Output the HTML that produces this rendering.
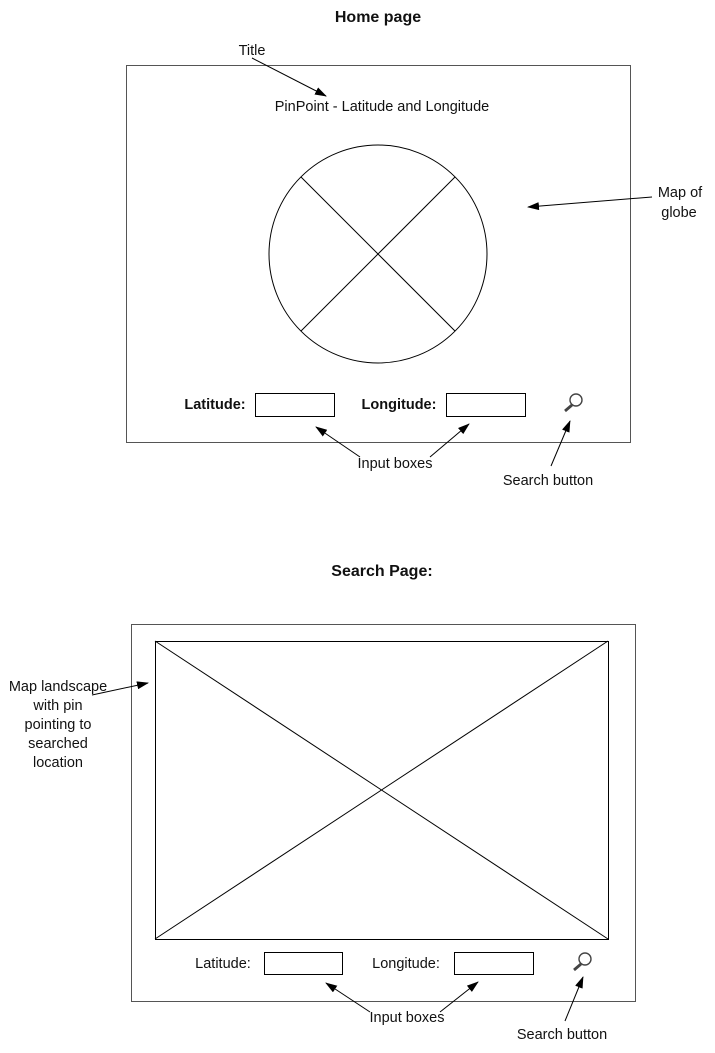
<!DOCTYPE html>
<html><head><meta charset="utf-8"><style>
html,body{margin:0;padding:0;background:#fff;width:715px;height:1053px;overflow:hidden}
svg{display:block}
text{font-family:"Liberation Sans",sans-serif;font-size:14.5px;fill:#111}
.b{font-weight:bold}
</style></head><body>
<svg width="715" height="1053" viewBox="0 0 715 1053">
<defs><marker id="a" markerWidth="12" markerHeight="8" refX="11" refY="4" orient="auto" markerUnits="userSpaceOnUse"><path d="M0,0 L12,4 L0,8 z" fill="#000"/></marker></defs>
<g stroke="#000" fill="none" stroke-width="1">
<rect x="126.5" y="65.5" width="504" height="377" stroke="#555"/>
<circle cx="378" cy="254" r="109"/>
<line x1="301" y1="177" x2="455" y2="331"/><line x1="455" y1="177" x2="301" y2="331"/>
<rect x="255.5" y="393.5" width="79" height="23"/>
<rect x="446.5" y="393.5" width="79" height="23"/>
<line x1="252" y1="58" x2="326" y2="96" marker-end="url(#a)"/>
<line x1="652" y1="197" x2="528" y2="207" marker-end="url(#a)"/>
<line x1="360" y1="457" x2="316" y2="427" marker-end="url(#a)"/>
<line x1="430" y1="457" x2="469" y2="424" marker-end="url(#a)"/>
<line x1="551" y1="466" x2="570" y2="421" marker-end="url(#a)"/>
<circle cx="576" cy="400" r="6" stroke="#444" stroke-width="1.4"/>
<line x1="572" y1="405" x2="565" y2="411" stroke="#444" stroke-width="2.8"/>

<rect x="131.5" y="624.5" width="504" height="377" stroke="#555"/>
<rect x="155.5" y="641.5" width="453" height="298"/>
<line x1="155" y1="641" x2="608" y2="939"/><line x1="608" y1="641" x2="155" y2="939"/>
<rect x="264.5" y="952.5" width="78" height="22"/>
<rect x="454.5" y="952.5" width="79" height="22"/>
<line x1="92" y1="695" x2="148" y2="683" marker-end="url(#a)"/>
<line x1="370" y1="1012" x2="326" y2="983" marker-end="url(#a)"/>
<line x1="440" y1="1012" x2="478" y2="982" marker-end="url(#a)"/>
<line x1="565" y1="1021" x2="583" y2="977" marker-end="url(#a)"/>
<circle cx="585" cy="959" r="6" stroke="#444" stroke-width="1.4"/>
<line x1="581" y1="964" x2="574" y2="970" stroke="#444" stroke-width="2.8"/>
</g>
<text x="378" y="22" text-anchor="middle" class="b" style="font-size:16px">Home page</text>
<text x="252" y="55" text-anchor="middle">Title</text>
<text x="382" y="111" text-anchor="middle">PinPoint - Latitude and Longitude</text>
<text x="680" y="197" text-anchor="middle">Map of</text>
<text x="679" y="217" text-anchor="middle">globe</text>
<text x="215" y="409" text-anchor="middle" class="b">Latitude:</text>
<text x="399" y="409" text-anchor="middle" class="b">Longitude:</text>
<text x="395" y="468" text-anchor="middle">Input boxes</text>
<text x="548" y="485" text-anchor="middle">Search button</text>

<text x="382" y="576" text-anchor="middle" class="b" style="font-size:16px">Search Page:</text>
<text x="58" y="691" text-anchor="middle">Map landscape</text>
<text x="58" y="710" text-anchor="middle">with pin</text>
<text x="58" y="729" text-anchor="middle">pointing to</text>
<text x="58" y="748" text-anchor="middle">searched</text>
<text x="58" y="767" text-anchor="middle">location</text>
<text x="223" y="968" text-anchor="middle">Latitude:</text>
<text x="406" y="968" text-anchor="middle">Longitude:</text>
<text x="407" y="1022" text-anchor="middle">Input boxes</text>
<text x="562" y="1039" text-anchor="middle">Search button</text>
</svg>
</body></html>
